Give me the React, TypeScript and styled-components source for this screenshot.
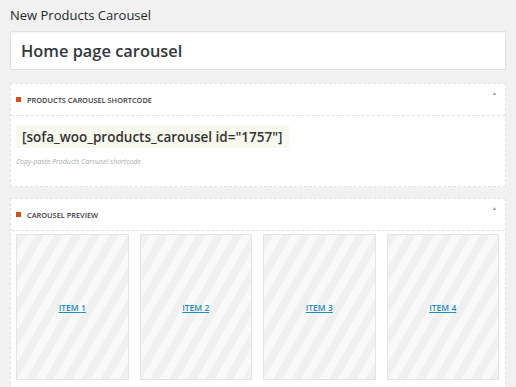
import React from "react";
import styled, { createGlobalStyle } from "styled-components";

const Global = createGlobalStyle`
  html, body { margin: 0; padding: 0; background: #f1f1f1; }
  body { font-family: "Open Sans", "Noto Sans", sans-serif; color: #23282d; }
`;

const Page = styled.div`
  padding: 6px 10px 0 10px;
  display: flex;
  flex-direction: column;
`;

const PageTitle = styled.h1`
  margin: 0;
  font-size: 13px;
  line-height: 18px;
  font-weight: 400;
  color: #23282d;
`;

const TitleInput = styled.div`
  margin-top: 7px;
  height: 37px;
  background: #fff;
  border: 1px solid #e2e2e2;
  box-shadow: inset 0 1px 2px rgba(0, 0, 0, 0.04);
  display: flex;
  align-items: center;
  padding-left: 10px;
  font-size: 16.4px;
  font-weight: 600;
  color: #32373c;
`;

const Panel = styled.section<{ $top: number }>`
  margin-top: ${(p) => p.$top}px;
  background: #fff;
  border: 1px dashed #e3e3e3;
  position: relative;
`;

const PanelHeader = styled.div`
  height: 31px;
  border-bottom: 1px dashed #e3e3e3;
  display: flex;
  align-items: center;
  padding-left: 5px;
  gap: 6px;
`;

const Marker = styled.span`
  width: 5px;
  height: 5px;
  background: #d54e21;
`;

const HeaderTitle = styled.h2`
  margin: 0;
  font-size: 7.4px;
  font-weight: 600;
  color: #3a3a3a;
  text-transform: uppercase;
`;

const Toggle = styled.span`
  position: absolute;
  right: 8px;
  top: 6px;
  font-size: 5px;
  color: #999;
`;

const ShortcodeBody = styled.div`
  padding: 9px 5px 20px 5px;
  display: flex;
  flex-direction: column;
  align-items: flex-start;
`;

const Code = styled.div`
  background: #f7f8ee;
  height: 23px;
  display: flex;
  align-items: center;
  padding: 0 6px;
  font-size: 13.5px;
  font-weight: 600;
  color: #333;
`;

const Hint = styled.p`
  margin: 9px 0 0 0;
  font-size: 7px;
  font-style: italic;
  color: #aaa;
`;

const Grid = styled.div`
  display: grid;
  grid-template-columns: repeat(4, 1fr);
  gap: 11px;
  padding: 3px 6px 8px 5px;
`;

const Item = styled.div`
  height: 144px;
  border: 1px solid #e4e4e4;
  background: repeating-linear-gradient(
    120deg,
    #f0f0f0 0px,
    #f0f0f0 8px,
    #f9f9f9 8px,
    #f9f9f9 16px
  );
  display: flex;
  align-items: center;
  justify-content: center;
`;

const ItemLink = styled.a`
  font-size: 8.5px;
  font-weight: 600;
  color: #1e8cbe;
  text-decoration: underline;
`;

export default function App() {
  return (
    <>
      <Global />
      <Page>
        <PageTitle>New Products Carousel</PageTitle>
        <TitleInput>Home page carousel</TitleInput>
        <Panel $top={13}>
          <PanelHeader>
            <Marker />
            <HeaderTitle>Products Carousel Shortcode</HeaderTitle>
          </PanelHeader>
          <Toggle>▲</Toggle>
          <ShortcodeBody>
            <Code>[sofa_woo_products_carousel id="1757"]</Code>
            <Hint>Copy-paste Products Carousel shortcode</Hint>
          </ShortcodeBody>
        </Panel>
        <Panel $top={11}>
          <PanelHeader>
            <Marker />
            <HeaderTitle>Carousel Preview</HeaderTitle>
          </PanelHeader>
          <Toggle>▲</Toggle>
          <Grid>
            {[1, 2, 3, 4].map((n) => (
              <Item key={n}>
                <ItemLink href="#">ITEM {n}</ItemLink>
              </Item>
            ))}
          </Grid>
        </Panel>
      </Page>
    </>
  );
}
